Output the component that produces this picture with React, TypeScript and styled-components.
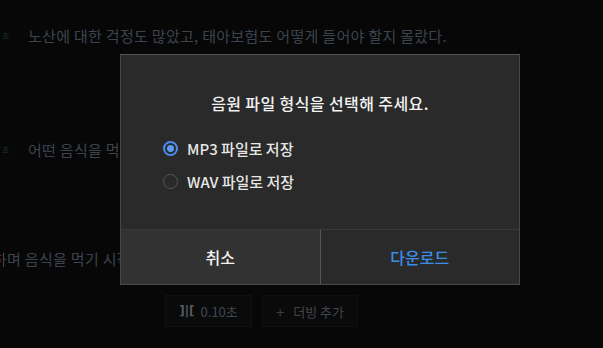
import React, { useState } from "react";
import styled, { createGlobalStyle } from "styled-components";

const GlobalStyle = createGlobalStyle`
  html, body {
    margin: 0;
    padding: 0;
    background: #070707;
  }
  body {
    font-family: "Noto Sans CJK KR", "Noto Sans", sans-serif;
  }
`;

const Page = styled.div`
  position: relative;
  width: 603px;
  height: 348px;
  overflow: hidden;
  background: #070707;
`;

const Script = styled.div`
  display: flex;
  flex-direction: column;
  padding-top: 25px;
`;

const Line = styled.div<{ $gap: number }>`
  display: flex;
  align-items: center;
  height: 20px;
  margin-top: ${(p) => p.$gap}px;
`;

const Marker = styled.span`
  width: 28px;
  padding-left: 2px;
  box-sizing: border-box;
  font-size: 8px;
  color: #173523;
`;

const LineText = styled.span<{ $shift?: number }>`
  margin-left: ${(p) => p.$shift || 0}px;
  font-size: 15px;
  letter-spacing: 0.3px;
  color: #3c444e;
  white-space: nowrap;
`;

const Cut = styled.span`
  background: linear-gradient(90deg, #6a1f1f 0 68%, #3c444e 68% 100%);
  -webkit-background-clip: text;
  background-clip: text;
  color: transparent;
`;

const Toolbar = styled.div`
  display: flex;
  gap: 10px;
  margin-top: 27px;
  padding-left: 165px;
`;

const Chip = styled.div<{ $w: number }>`
  display: flex;
  align-items: center;
  justify-content: center;
  gap: 6px;
  width: ${(p) => p.$w}px;
  height: 32px;
  background: #0a0a0a;
  border: 1px solid #101010;
  box-sizing: border-box;
  font-size: 13px;
  color: #40464d;
`;

const Gap = styled.b`
  color: #575b60;
  font-family: "DejaVu Sans", sans-serif;
  font-size: 12px;
`;

const Secs = styled.span`
  color: #3e4955;
`;

const Plus = styled.span`
  color: #3a3f45;
  font-size: 15px;
  margin-right: 3px;
`;

const Modal = styled.div`
  position: absolute;
  left: 120px;
  top: 54px;
  width: 400px;
  height: 231px;
  box-sizing: border-box;
  display: flex;
  flex-direction: column;
  background: #2a2a2a;
  border: 1px solid #474747;
  border-top-color: #525252;
`;

const Body = styled.div`
  flex: 1;
  padding: 38px 42px 0;
`;

const Title = styled.div`
  text-align: center;
  font-size: 16px;
  letter-spacing: 0.4px;
  line-height: 20px;
  font-weight: 500;
  color: #f2f2f2;
`;

const Options = styled.div`
  display: flex;
  flex-direction: column;
  gap: 11px;
  margin-top: 24px;
`;

const Option = styled.label`
  display: flex;
  align-items: center;
  gap: 9px;
  height: 22px;
  cursor: pointer;
  font-size: 15px;
  font-weight: 500;
  color: #e6e6e6;
`;

const Radio = styled.span<{ $on: boolean }>`
  width: 15px;
  height: 15px;
  box-sizing: border-box;
  border-radius: 50%;
  border: ${(p) => (p.$on ? "2px solid #4a8ef2" : "1.5px solid #555")};
  display: flex;
  align-items: center;
  justify-content: center;
  &::after {
    content: "";
    width: 7px;
    height: 7px;
    border-radius: 50%;
    background: ${(p) => (p.$on ? "#5b9cf6" : "transparent")};
  }
`;

const Footer = styled.div`
  display: flex;
  height: 54px;
  border-top: 1px solid #3a3a3a;
`;

const FootButton = styled.button<{ $primary?: boolean }>`
  flex: 1;
  border: none;
  margin: 0;
  background: ${(p) => (p.$primary ? "#2a2a2a" : "#323232")};
  border-left: ${(p) => (p.$primary ? "1px solid #555" : "none")};
  color: ${(p) => (p.$primary ? "#3b8ee8" : "#f2f2f2")};
  font-family: "Noto Sans CJK KR", "Noto Sans", sans-serif;
  font-size: 16px;
  font-weight: 500;
  cursor: pointer;
`;

const formats = [
  { id: "mp3", label: "MP3 파일로 저장" },
  { id: "wav", label: "WAV 파일로 저장" },
];

export default function App() {
  const [format, setFormat] = useState("mp3");
  return (
    <Page>
      <GlobalStyle />
      <Script>
        <Line $gap={0}>
          <Marker>초</Marker>
          <LineText>노산에 대한 걱정도 많았고, 태아보험도 어떻게 들어야 할지 몰랐다.</LineText>
        </Line>
        <Line $gap={94}>
          <Marker>초</Marker>
          <LineText>어떤 음식을 먹어야 하는지도 잘 몰랐다.</LineText>
        </Line>
        <Line $gap={89}>
          <LineText $shift={-7}>
            <Cut>하</Cut>며 음식을 먹기 시작했다.
          </LineText>
        </Line>
        <Toolbar>
          <Chip $w={87}>
            <Gap>]|[</Gap>
            <Secs>0.10초</Secs>
          </Chip>
          <Chip $w={96}>
            <Plus>+</Plus>더빙 추가
          </Chip>
        </Toolbar>
      </Script>

      <Modal>
        <Body>
          <Title>음원 파일 형식을 선택해 주세요.</Title>
          <Options>
            {formats.map((f) => (
              <Option key={f.id} onClick={() => setFormat(f.id)}>
                <Radio $on={format === f.id} />
                {f.label}
              </Option>
            ))}
          </Options>
        </Body>
        <Footer>
          <FootButton>취소</FootButton>
          <FootButton $primary>다운로드</FootButton>
        </Footer>
      </Modal>
    </Page>
  );
}
